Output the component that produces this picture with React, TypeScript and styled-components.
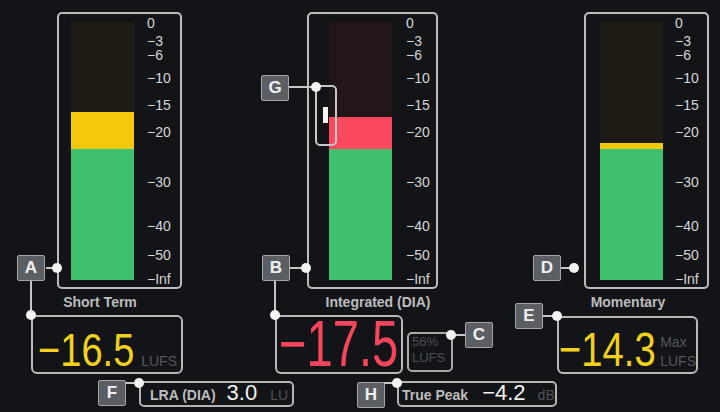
import React from "react";
import styled, { createGlobalStyle } from "styled-components";

// Types
type Segment = { color: string; height: number };

type MeterProps = {
  title: string;
  width: number;
  offset: number;
  barLeft: number;
  scaleGap: number;
  tint: string;
  titleCenter: number;
  segments: Segment[];
};

type CalloutProps = {
  letter: string;
  x: number;
  y: number;
  wires: [number, number, number, number][];
  dots: [number, number][];
};

// Palette
const GREEN = "#3fc06d";
const YELLOW = "#f5c90b";
const RED = "#fa485e";

const GlobalStyle = createGlobalStyle`
  html, body {
    margin: 0;
    padding: 0;
    background: #121418;
  }
  body {
    font-family: "Liberation Sans", Arial, sans-serif;
  }
`;

// Layout
const Screen = styled.div`
  position: relative;
  width: 720px;
  height: 412px;
  overflow: hidden;
  box-sizing: border-box;
  padding-top: 12px;
  background: #121418;
  display: flex;
  flex-direction: column;
`;

const MeterRow = styled.div`
  display: flex;
  padding-left: 57px;
`;

const MeterColumn = styled.div<{ $offset: number }>`
  display: flex;
  flex-direction: column;
  gap: 6px;
  margin-left: ${(p) => p.$offset}px;
`;

const Frame = styled.div<{ $width: number; $barLeft: number }>`
  box-sizing: border-box;
  width: ${(p) => p.$width}px;
  height: 277px;
  border: 2px solid #bcbcbc;
  border-radius: 5px;
  display: flex;
  padding: 8px 0 7px ${(p) => p.$barLeft - 2}px;
`;

const Bar = styled.div<{ $tint: string }>`
  width: 63px;
  height: 258px;
  flex-shrink: 0;
  background: ${(p) => p.$tint};
  display: flex;
  flex-direction: column;
  justify-content: flex-end;
`;

const Fill = styled.div<{ $color: string }>`
  flex-shrink: 0;
  background: ${(p) => p.$color};
`;

const Scale = styled.div<{ $gap: number }>`
  position: relative;
  flex: 1;
  margin-left: ${(p) => p.$gap}px;
`;

const Tick = styled.span`
  position: absolute;
  left: 0;
  font-size: 14px;
  line-height: 11px;
  color: #d6d6d6;
  white-space: nowrap;
`;

const MeterTitle = styled.div<{ $center: number }>`
  width: ${(p) => p.$center * 2}px;
  flex-shrink: 0;
  text-align: center;
  font-size: 14px;
  line-height: 14px;
  font-weight: 700;
  color: #bdbdbd;
  white-space: nowrap;
`;

const ValueRow = styled.div`
  display: flex;
  align-items: flex-start;
  height: 59px;
  margin-top: 6px;
`;

const ValueBox = styled.div<{
  $left: number;
  $width: number;
  $height: number;
  $top?: number;
  $padLeft: number;
  $padRight: number;
  $padBottom: number;
}>`
  box-sizing: border-box;
  flex-shrink: 0;
  display: flex;
  align-items: flex-end;
  margin-left: ${(p) => p.$left}px;
  margin-top: ${(p) => p.$top ?? 0}px;
  width: ${(p) => p.$width}px;
  height: ${(p) => p.$height}px;
  padding: 0 ${(p) => p.$padRight}px ${(p) => p.$padBottom}px
    ${(p) => p.$padLeft}px;
  border: 2px solid #b9b9b9;
  border-radius: 6px;
`;

const Reading = styled.span<{ $size: number; $scale: number; $color: string }>`
  flex: 1;
  min-width: 0;
  font-size: ${(p) => p.$size}px;
  line-height: 0.8;
  color: ${(p) => p.$color};
  white-space: nowrap;
  transform: scaleX(${(p) => p.$scale});
  transform-origin: left bottom;
`;

const Unit = styled.span`
  font-size: 14px;
  line-height: 19px;
  margin-bottom: -2px;
  color: #55585d;
  white-space: nowrap;
`;

const GateBox = styled.div`
  box-sizing: border-box;
  flex-shrink: 0;
  margin: 17px 0 0 4px;
  width: 46px;
  height: 40px;
  padding-left: 3px;
  border: 2px solid #a9a9a9;
  border-radius: 5px;
  font-size: 13px;
  line-height: 16px;
  color: #4c4f54;
`;

const BottomRow = styled.div`
  display: flex;
  margin-top: 7px;
`;

const InfoBox = styled.div<{ $left: number; $width: number; $padLeft: number }>`
  box-sizing: border-box;
  display: flex;
  align-items: baseline;
  margin-left: ${(p) => p.$left}px;
  width: ${(p) => p.$width}px;
  height: 26px;
  padding-left: ${(p) => p.$padLeft}px;
  border: 2px solid #b3b3b3;
  border-radius: 5px;
  white-space: nowrap;
`;

const InfoLabel = styled.span`
  font-size: 14px;
  font-weight: 700;
  color: #bdbdbd;
`;

const InfoValue = styled.span<{ $gap: number }>`
  margin-left: ${(p) => p.$gap}px;
  font-size: 22px;
  line-height: 20px;
  color: #f2f2f2;
`;

const InfoUnit = styled.span<{ $gap: number }>`
  margin-left: ${(p) => p.$gap}px;
  font-size: 14px;
  color: #4d5055;
`;

// Annotation overlay
const Badge = styled.div<{ $x: number; $y: number }>`
  position: absolute;
  left: ${(p) => p.$x}px;
  top: ${(p) => p.$y}px;
  box-sizing: border-box;
  width: 28px;
  height: 26px;
  display: flex;
  align-items: center;
  justify-content: center;
  background: #5b5f64;
  border: 1.5px solid #a4a6a9;
  border-radius: 2px;
  color: #f0f0f0;
  font-size: 17px;
  font-weight: 700;
`;

const Dot = styled.div<{ $x: number; $y: number }>`
  position: absolute;
  left: ${(p) => p.$x - 5}px;
  top: ${(p) => p.$y - 5}px;
  width: 10px;
  height: 10px;
  border-radius: 50%;
  background: #f3f3f3;
`;

const Wire = styled.div<{ $x: number; $y: number; $w: number; $h: number }>`
  position: absolute;
  left: ${(p) => p.$x}px;
  top: ${(p) => p.$y}px;
  width: ${(p) => p.$w}px;
  height: ${(p) => p.$h}px;
  background: #c6c6c6;
`;

const Bracket = styled.div`
  position: absolute;
  left: 315px;
  top: 85px;
  box-sizing: border-box;
  width: 22px;
  height: 61px;
  padding: 20px 0 0 6px;
  border: 2px solid #c8c8c8;
  border-radius: 5px;
`;

const RangeMarker = styled.div`
  width: 5px;
  height: 16px;
  background: #f4f4f4;
`;

// Data
const ticks: [string, number][] = [
  ["0", 1],
  ["\u22123", 19],
  ["\u22126", 33],
  ["\u221210", 56],
  ["\u221215", 83],
  ["\u221220", 110],
  ["\u221230", 160],
  ["\u221240", 204],
  ["\u221250", 233],
  ["\u2212Inf", 257],
];

const meters: MeterProps[] = [
  {
    title: "Short Term",
    width: 125,
    offset: 0,
    barLeft: 14,
    scaleGap: 13,
    tint: "#1e1c14",
    titleCenter: 43,
    segments: [
      { color: YELLOW, height: 37 },
      { color: GREEN, height: 131 },
    ],
  },
  {
    title: "Integrated (DIA)",
    width: 131,
    offset: 125,
    barLeft: 22,
    scaleGap: 14,
    tint: "#221619",
    titleCenter: 71,
    segments: [
      { color: RED, height: 32 },
      { color: GREEN, height: 131 },
    ],
  },
  {
    title: "Momentary",
    width: 125,
    offset: 135,
    barLeft: 16,
    scaleGap: 12,
    tint: "#1e1c14",
    titleCenter: 44,
    segments: [
      { color: YELLOW, height: 6 },
      { color: GREEN, height: 131 },
    ],
  },
];

const callouts: CalloutProps[] = [
  { letter: "A", x: 17, y: 255, wires: [[46, 268, 57, 268], [31, 281, 31, 315]], dots: [[57, 268], [31, 315]] },
  { letter: "B", x: 262, y: 255, wires: [[289, 268, 306, 268], [275, 281, 275, 315]], dots: [[306, 268], [275, 315]] },
  { letter: "C", x: 465, y: 322, wires: [[451, 335, 465, 335]], dots: [[451, 335]] },
  { letter: "D", x: 533, y: 255, wires: [[561, 268, 574, 268]], dots: [[574, 268]] },
  { letter: "E", x: 515, y: 303, wires: [[542, 316, 557, 316]], dots: [[557, 316]] },
  { letter: "F", x: 98, y: 380, wires: [[125, 383, 139, 383]], dots: [[139, 383]] },
  { letter: "G", x: 261, y: 75, wires: [[288, 87, 316, 87]], dots: [[316, 87]] },
  { letter: "H", x: 357, y: 382, wires: [[384, 383, 397, 383]], dots: [[397, 383]] },
];

const Meter: React.FC<MeterProps> = ({
  title,
  width,
  offset,
  barLeft,
  scaleGap,
  tint,
  titleCenter,
  segments,
}) => (
  <MeterColumn $offset={offset}>
    <Frame $width={width} $barLeft={barLeft}>
      <Bar $tint={tint}>
        {segments.map((s, i) => (
          <Fill key={i} $color={s.color} style={{ height: s.height }} />
        ))}
      </Bar>
      <Scale $gap={scaleGap}>
        {ticks.map(([label, center]) => (
          <Tick key={label} style={{ top: center - 5 }}>
            {label}
          </Tick>
        ))}
      </Scale>
    </Frame>
    <MeterTitle $center={titleCenter}>{title}</MeterTitle>
  </MeterColumn>
);

const Callout: React.FC<CalloutProps> = ({ letter, x, y, wires, dots }) => (
  <>
    {wires.map(([x1, y1, x2, y2], i) => (
      <Wire
        key={i}
        $x={Math.min(x1, x2) - (x1 === x2 ? 1 : 0)}
        $y={Math.min(y1, y2) - (y1 === y2 ? 1 : 0)}
        $w={x1 === x2 ? 2 : Math.abs(x2 - x1)}
        $h={y1 === y2 ? 2 : Math.abs(y2 - y1)}
      />
    ))}
    <Badge $x={x} $y={y}>
      {letter}
    </Badge>
    {dots.map(([dx, dy], i) => (
      <Dot key={i} $x={dx} $y={dy} />
    ))}
  </>
);

export default function App() {
  return (
    <Screen>
      <GlobalStyle />
      <MeterRow>
        {meters.map((m) => (
          <Meter key={m.title} {...m} />
        ))}
      </MeterRow>

      <ValueRow>
        <ValueBox $left={31} $width={152} $height={59} $padLeft={5} $padRight={4} $padBottom={3}>
          <Reading $size={47} $scale={0.81} $color="#f2d11e">
            {"\u221216.5"}
          </Reading>
          <Unit>LUFS</Unit>
        </ValueBox>
        <ValueBox $left={92} $width={128} $height={59} $padLeft={2} $padRight={2} $padBottom={2}>
          <Reading $size={65} $scale={0.725} $color="#f7465b">
            {"\u221217.5"}
          </Reading>
        </ValueBox>
        <GateBox>
          56%
          <br />
          LUFS
        </GateBox>
        <ValueBox $left={104} $width={141} $height={58} $top={1} $padLeft={0} $padRight={0} $padBottom={3}>
          <Reading $size={49} $scale={0.78} $color="#f2d11e">
            {"\u221214.3"}
          </Reading>
          <Unit>
            Max
            <br />
            LUFS
          </Unit>
        </ValueBox>
      </ValueRow>

      <BottomRow>
        <InfoBox $left={139} $width={155} $padLeft={9}>
          <InfoLabel>LRA (DIA)</InfoLabel>
          <InfoValue $gap={11}>3.0</InfoValue>
          <InfoUnit $gap={13}>LU</InfoUnit>
        </InfoBox>
        <InfoBox $left={103} $width={160} $padLeft={3}>
          <InfoLabel>True Peak</InfoLabel>
          <InfoValue $gap={14}>{"\u22124.2"}</InfoValue>
          <InfoUnit $gap={12}>dB</InfoUnit>
        </InfoBox>
      </BottomRow>

      <Bracket>
        <RangeMarker />
      </Bracket>
      {callouts.map((c) => (
        <Callout key={c.letter} {...c} />
      ))}
    </Screen>
  );
}
